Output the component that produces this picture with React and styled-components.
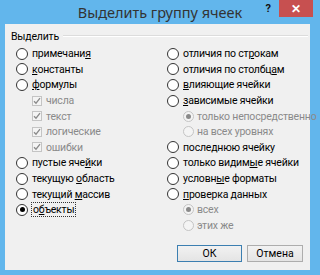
import React from 'react';
import styled, { createGlobalStyle } from 'styled-components';

const Global = createGlobalStyle`
  html, body { margin: 0; padding: 0; }
  body {
    width: 320px; height: 275px; overflow: hidden;
    background: #62b6ec;
    font-family: Roboto, "Noto Sans", sans-serif;
  }
`;

const Window = styled.div`
  width: 320px; height: 275px;
  background: #62b6ec;
  display: flex; flex-direction: column;
`;

const TitleBar = styled.div`
  height: 24px; flex: none;
  display: grid;
  grid-template-columns: 1fr auto 1fr;
`;

const Title = styled.div`
  grid-column: 2;
  font-family: "Noto Sans", sans-serif;
  font-size: 14.5px; color: #333;
  line-height: 24px;
`;

const Controls = styled.div`
  grid-column: 3;
  justify-self: end;
  display: flex; align-items: flex-start;
`;

const Help = styled.span`
  font-size: 11px; font-weight: bold; color: #111;
  margin: 2px 8px 0 0;
`;

const Close = styled.div`
  width: 34px; height: 17px;
  margin-right: 7px;
  background: #c75050;
  color: #fff; font-size: 12px; font-weight: bold;
  display: flex; align-items: center; justify-content: center;
`;

const Client = styled.div`
  flex: 1;
  margin: 0 10px 5px 5px;
  background: #f0f0f0;
  display: flex; flex-direction: column;
  padding: 5px 0 0 6px;
`;

const GroupHeader = styled.div`
  display: flex; align-items: center; gap: 4px;
  height: 14px; font-size: 10.5px; letter-spacing: -0.2px; color: #000;
  margin-right: 2px;
`;

const GroupLine = styled.div`
  flex: 1;
  border-top: 1px solid #dcdcdc;
  border-bottom: 1px solid #ffffff;
`;

const Columns = styled.div`
  display: grid;
  grid-template-columns: 151px 1fr;
  margin: 3px 0 0 5px;
`;

const Column = styled.div`
  display: flex; flex-direction: column;
`;

const Row = styled.div`
  height: 15.6px;
  display: flex; align-items: center;
  gap: ${p => (p.$sub ? '3px' : '4px')};
  padding-left: ${p => (p.$sub ? '16px' : '0')};
  font-size: 10.5px;
  letter-spacing: -0.2px;
  color: ${p => (p.$disabled ? '#8a8a8a' : '#000')};
  white-space: nowrap;
`;

const RadioCircle = styled.span`
  box-sizing: border-box;
  width: ${p => p.$size}px; height: ${p => p.$size}px;
  flex: none;
  border-radius: 50%;
  border: 1px solid ${p => (p.$disabled ? '#c4c4c4' : '#333')};
  background: ${p => (p.$disabled ? '#f4f4f4' : '#fff')};
  display: flex; align-items: center; justify-content: center;
`;

const Dot = styled.span`
  width: 5px; height: 5px; border-radius: 50%;
  background: ${p => (p.$disabled ? '#8a8a8a' : '#000')};
`;

const CheckBox = styled.span`
  box-sizing: border-box;
  width: 10px; height: 10px; flex: none;
  border: 1px solid #c4c4c4;
  background: #f4f4f4;
  display: flex; align-items: center; justify-content: center;
`;

const CheckText = styled.span`
  margin-left: 1px;
`;

const U = styled.span`
  text-decoration: underline;
  text-underline-offset: 1px;
`;

const Focus = styled.span`
  outline: 1px dotted #333;
  outline-offset: 0px;
  padding: 0 1px;
`;

const Footer = styled.div`
  margin-top: auto;
  display: flex; justify-content: flex-end; gap: 5px;
  padding: 0 7px 8px 0;
`;

const Button = styled.div`
  box-sizing: border-box;
  width: ${p => p.$w}px; height: 17px;
  border: 1px solid ${p => (p.$default ? '#3c7fb1' : '#adadad')};
  background: linear-gradient(#f2f2f2, #e4e4e4);
  font-size: 10.5px; color: #000;
  display: flex; align-items: center; justify-content: center;
`;

function Label({ text, u }) {
  if (u == null) return <span>{text}</span>;
  return (
    <span>
      {text.slice(0, u)}
      <U>{text[u]}</U>
      {text.slice(u + 1)}
    </span>
  );
}

function RadioRow({ text, u, checked, disabled, sub, focus }) {
  const label = <Label text={text} u={u} />;
  return (
    <Row $sub={sub} $disabled={disabled}>
      <RadioCircle $size={sub ? 11 : 12} $disabled={disabled}>
        {checked && <Dot $disabled={disabled} />}
      </RadioCircle>
      {focus ? <Focus>{label}</Focus> : label}
    </Row>
  );
}

function CheckRow({ text }) {
  return (
    <Row $sub $disabled>
      <CheckBox>
        <svg width="8" height="8" viewBox="0 0 8 8">
          <path d="M1 4.2 L3 6.2 L7 1.2" fill="none" stroke="#8a8a8a" strokeWidth="1.3" />
        </svg>
      </CheckBox>
      <CheckText>{text}</CheckText>
    </Row>
  );
}

export default function App() {
  return (
    <>
      <Global />
      <Window>
        <TitleBar>
          <Title>Выделить группу ячеек</Title>
          <Controls>
            <Help>?</Help>
            <Close>✕</Close>
          </Controls>
        </TitleBar>
        <Client>
          <GroupHeader>
            <span>Выделить</span>
            <GroupLine />
          </GroupHeader>
          <Columns>
            <Column>
              <RadioRow text="примечания" u={9} />
              <RadioRow text="константы" u={0} />
              <RadioRow text="формулы" u={0} />
              <CheckRow text="числа" />
              <CheckRow text="текст" />
              <CheckRow text="логические" />
              <CheckRow text="ошибки" />
              <RadioRow text="пустые ячейки" u={10} />
              <RadioRow text="текущую область" u={8} />
              <RadioRow text="текущий массив" u={8} />
              <RadioRow text="объекты" u={1} checked focus />
            </Column>
            <Column>
              <RadioRow text="отличия по строкам" u={13} />
              <RadioRow text="отличия по столбцам" u={17} />
              <RadioRow text="влияющие ячейки" u={0} />
              <RadioRow text="зависимые ячейки" u={0} />
              <RadioRow text="только непосредственно" sub disabled checked />
              <RadioRow text="на всех уровнях" sub disabled />
              <RadioRow text="последнюю ячейку" u={5} />
              <RadioRow text="только видимые ячейки" u={12} />
              <RadioRow text="условные форматы" u={6} />
              <RadioRow text="проверка данных" u={0} />
              <RadioRow text="всех" sub disabled checked />
              <RadioRow text="этих же" sub disabled />
            </Column>
          </Columns>
          <Footer>
            <Button $w={65} $default>ОК</Button>
            <Button $w={56}>Отмена</Button>
          </Footer>
        </Client>
      </Window>
    </>
  );
}
